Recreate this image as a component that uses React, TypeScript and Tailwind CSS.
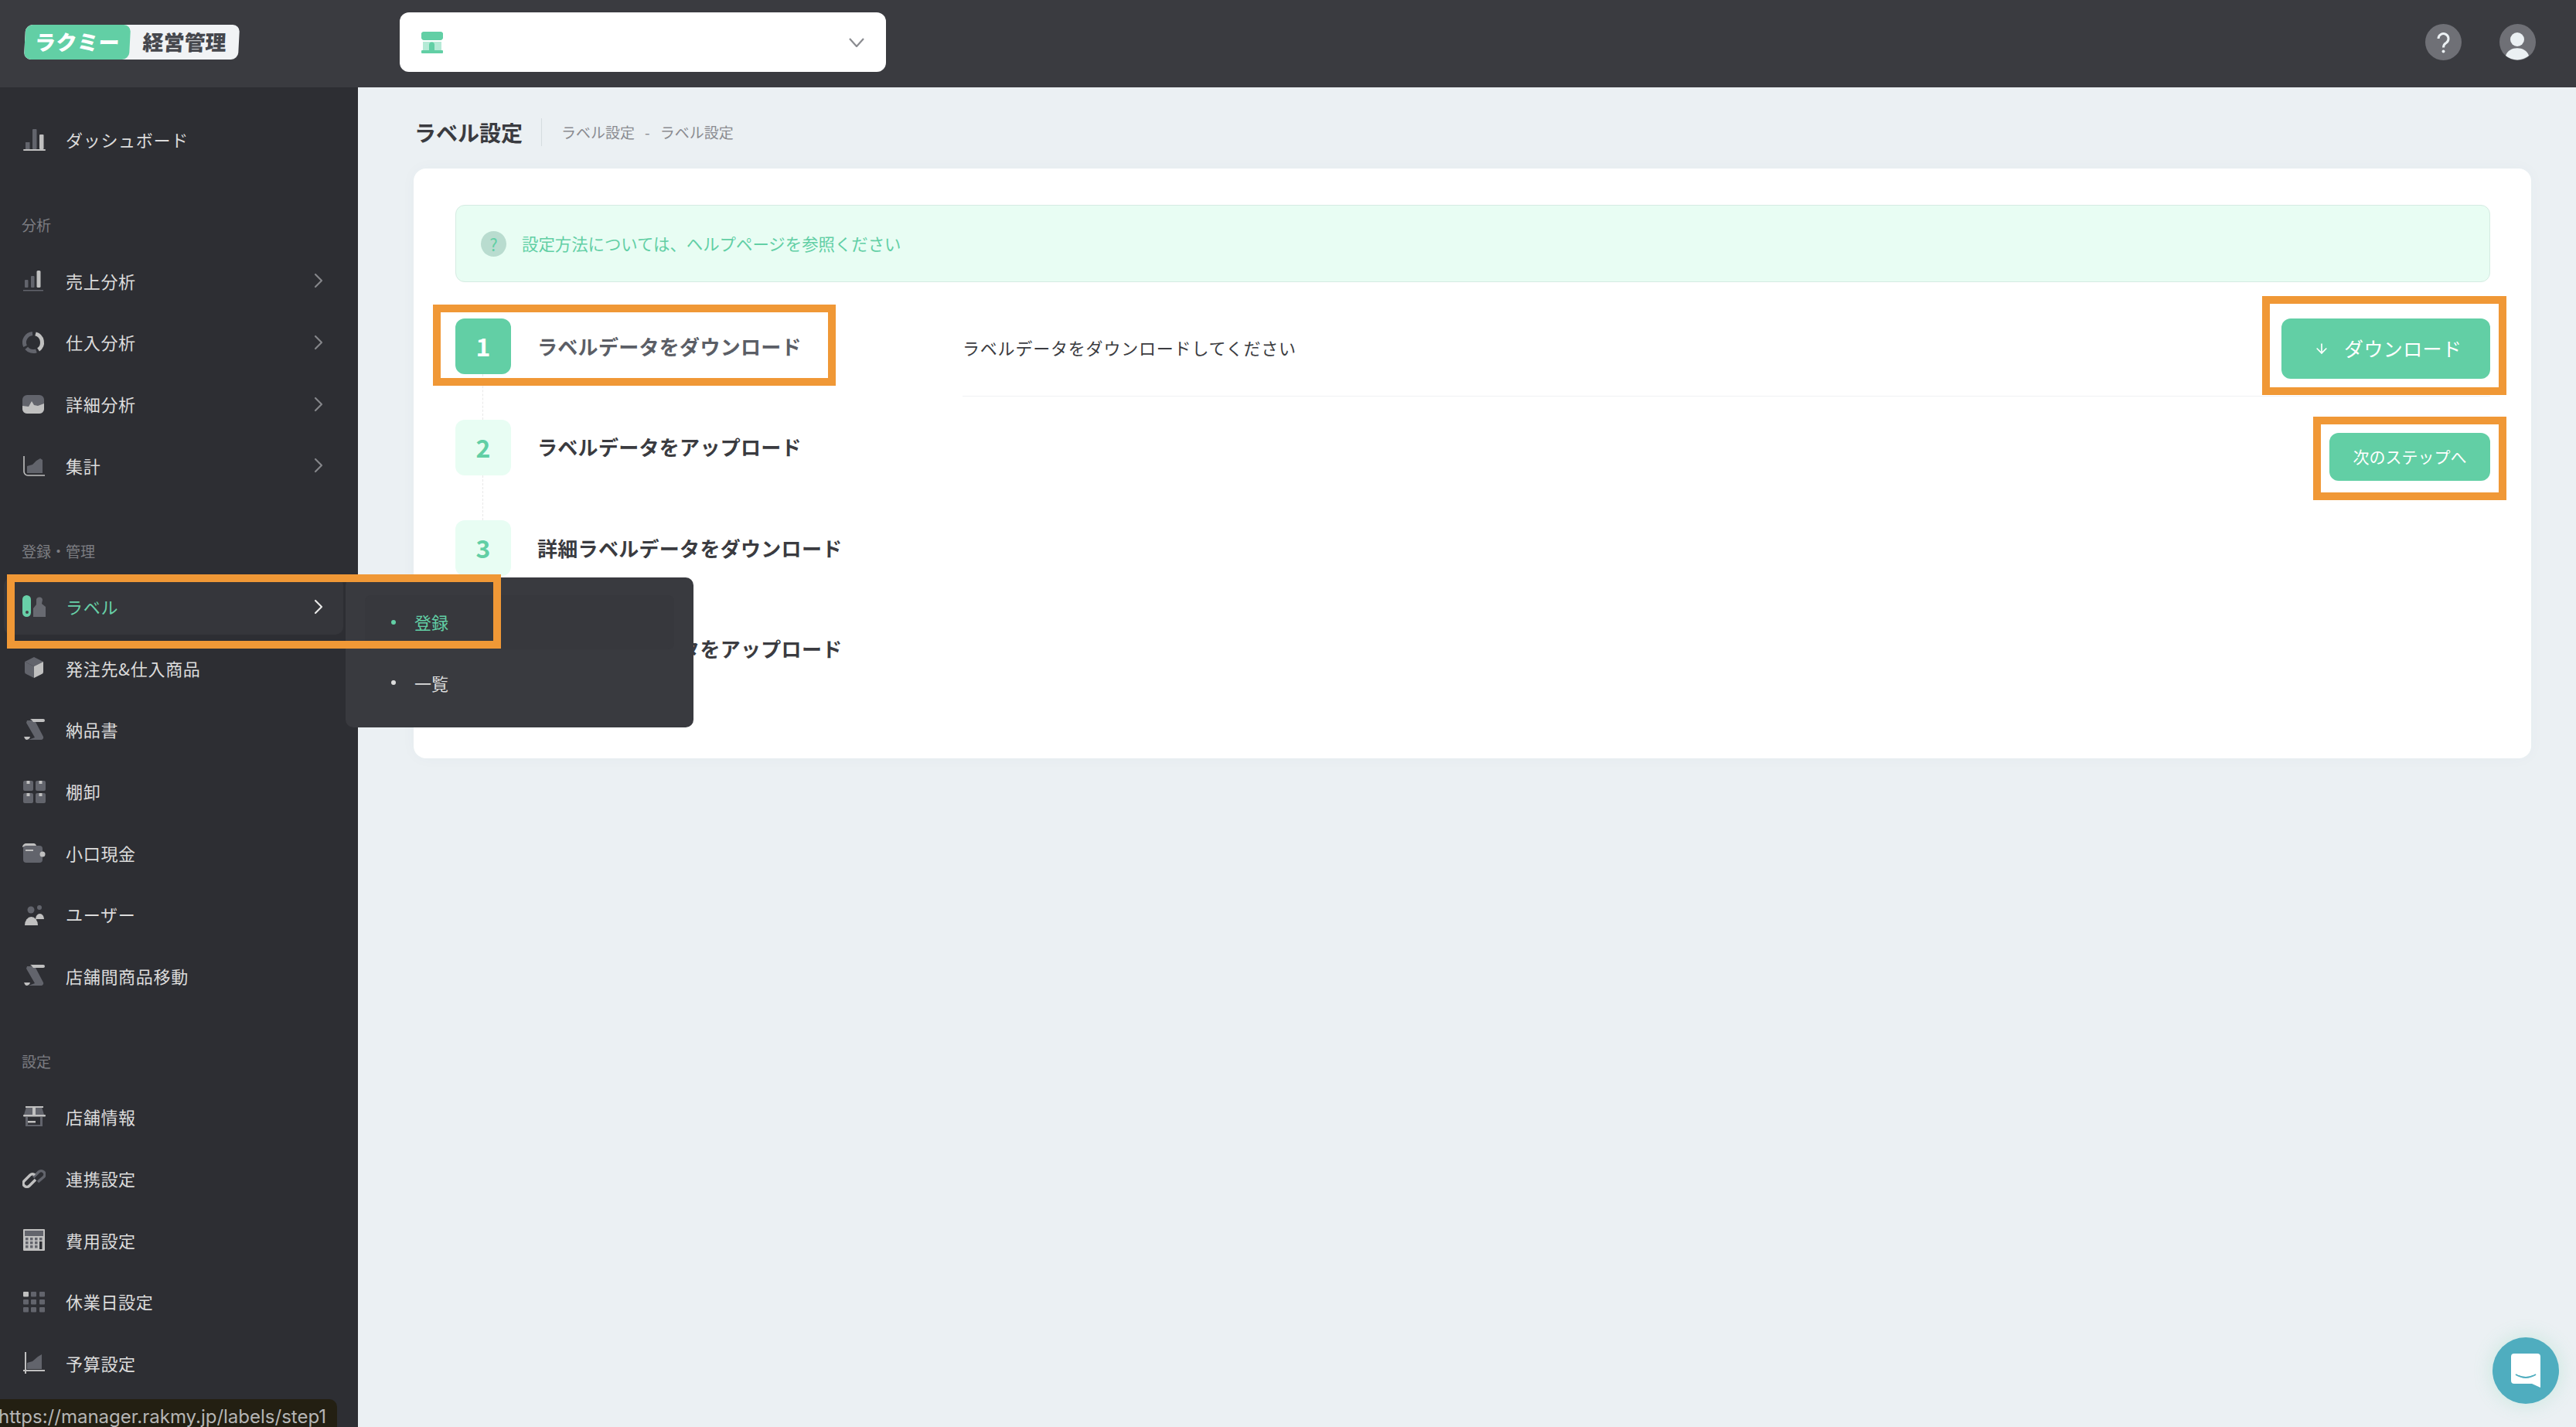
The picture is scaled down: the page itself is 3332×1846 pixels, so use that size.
import React from "react";
import { ChevronRight, ArrowDown } from "lucide-react";

const D = "#62646c";
const L = "#c0c0c0";

const Svg = ({ children }: { children: React.ReactNode }) => (
  <svg width="30" height="30" viewBox="0 0 30 30" className="shrink-0">{children}</svg>
);

const icons: Record<string, React.ReactNode> = {
  dash: (
    <Svg>
      <rect x="4" y="18" width="5.5" height="9" fill={D} />
      <rect x="13" y="1" width="5.5" height="26" rx="1" fill={D} />
      <rect x="22" y="8" width="5.5" height="19" rx="1" fill={L} />
      <rect x="1" y="27" width="29" height="2" rx="1" fill={L} />
    </Svg>
  ),
  sales: (
    <Svg>
      <rect x="3" y="14" width="4.5" height="10" rx="1" fill={D} />
      <rect x="11" y="9" width="4.5" height="15" rx="1" fill={D} />
      <rect x="18.5" y="2" width="5" height="22" rx="1.5" fill={L} />
      <rect x="1" y="27" width="26" height="1.5" fill={D} />
    </Svg>
  ),
  donut: (
    <Svg>
      <path d="M17 3.9 A11.5 11.5 0 0 1 20.6 24.4" fill="none" stroke={L} strokeWidth="5" />
      <path d="M17.9 25.8 A11.5 11.5 0 0 1 5.2 22.4" fill="none" stroke={D} strokeWidth="5" />
      <path d="M3.6 19.9 A11.5 11.5 0 0 1 13 3.5" fill="none" stroke={D} strokeWidth="5" />
    </Svg>
  ),
  area: (
    <Svg>
      <rect x="0" y="3" width="28" height="24" rx="6" fill={D} />
      <path d="M0 17 L8 18 L12 11 L15 16 L20 17 L28 14 V21 a6 6 0 0 1 -6 6 H6 a6 6 0 0 1 -6 -6 Z" fill={L} />
    </Svg>
  ),
  total: (
    <Svg>
      <path d="M2 3 V23 a5 5 0 0 0 5 5 H29" fill="none" stroke={L} strokeWidth="1.6" />
      <path d="M6 25 V16 L13 14 L18 9 L23 6 L26 8 V25 Z" fill={D} />
    </Svg>
  ),
  label: (
    <Svg>
      <path d="M14 28 V17 L18 12 V7 a4 4 0 0 1 8 -1 L25 11 L30 15 V28 Z" fill={D} />
      <rect x="0" y="0" width="11" height="28" rx="5.5" fill="#62cfa5" />
      <circle cx="6" cy="22" r="2" fill="#3a3b40" />
    </Svg>
  ),
  box: (
    <Svg>
      <path d="M15 1 L27 7 L15 13 L3 7 Z" fill={D} />
      <path d="M3 7 L15 13 V28 L5 23 a3 3 0 0 1 -2 -3 Z" fill={D} />
      <path d="M27 7 L15 13 V28 L25 23 a3 3 0 0 0 2 -3 Z" fill={L} />
    </Svg>
  ),
  doc: (
    <Svg>
      <path d="M6 3 H16 L27 24 a3 3 0 0 1 -3 4 H8 L16 25 L5 6 Z" fill={D} />
      <path d="M10 1 H27 a1 1 0 0 1 0 4 H14 Q12 2 10 1 Z" fill={L} />
      <path d="M2 24 H10 Q9 28 5 28 Q3 27 2 24 Z" fill={L} />
    </Svg>
  ),
  grid: (
    <Svg>
      {[[1, 1], [17, 1], [1, 17], [17, 17]].map(([x, y]) => (
        <g key={`${x}-${y}`}>
          <rect x={x} y={y} width="13" height="13" rx="2" fill={D} />
          <rect x={x + 4.5} y={y} width="4" height="4" fill={L} />
        </g>
      ))}
    </Svg>
  ),
  wallet: (
    <Svg>
      <path d="M0 8 a5 5 0 0 1 5 -5 H15 a4 4 0 0 1 3 4 H3 Z" fill={L} />
      <rect x="1" y="6" width="25" height="22" rx="4" fill={D} />
      <rect x="4" y="11" width="10" height="2" fill={L} />
      <circle cx="26" cy="17" r="3.5" fill={L} />
    </Svg>
  ),
  users: (
    <Svg>
      <circle cx="11" cy="9" r="4.5" fill={D} />
      <circle cx="22" cy="6" r="3" fill={D} />
      <path d="M3 29 a8.5 11 0 0 1 17 0 Z" fill={L} />
      <path d="M17 21 a5.5 7 0 0 1 11 0 Z" fill={L} />
    </Svg>
  ),
  store: (
    <Svg>
      <path d="M5 2 H25 L28 12 H2 Z" fill={D} />
      <rect x="4" y="1" width="23" height="2" fill={L} />
      <rect x="1" y="12" width="29" height="2.5" rx="1" fill={L} />
      <path d="M4 15 V27 H26 V15 H23 V25 H7 V15 Z" fill={D} />
      <rect x="7" y="20" width="10" height="2.5" fill={L} />
      <rect x="13" y="3" width="4" height="9" fill={L} />
    </Svg>
  ),
  link: (
    <Svg>
      <path d="M14 13 L21 6 a4.5 4.5 0 0 1 6.5 6.5 L20 19" fill="none" stroke={D} strokeWidth="3.5" />
      <path d="M17 16 L9 24 a4.5 4.5 0 0 1 -6.5 -6.5 L10 10 a4.5 4.5 0 0 1 6 0" fill="none" stroke={L} strokeWidth="3.5" />
    </Svg>
  ),
  calc: (
    <Svg>
      <rect x="1" y="1" width="28" height="28" rx="1" fill={L} />
      <rect x="3" y="3" width="24" height="7" fill={D} />
      {[12, 17, 22].map((y) =>
        [4, 10, 16].map((x) => <rect key={`${x}-${y}`} x={x} y={y} width="3.5" height="3.5" fill={D} />)
      )}
      <rect x="22" y="12" width="3.5" height="3.5" fill={D} />
      <rect x="22" y="17" width="3.5" height="10" fill="#2d2e33" />
    </Svg>
  ),
  days: (
    <Svg>
      {[2, 12, 22].map((y, r) =>
        [1, 11, 22].map((x, c) => (
          <rect key={`${r}-${c}`} x={x} y={y} width="7" height="6.5" rx="1" fill={r === 0 && c === 0 ? L : D} />
        ))
      )}
    </Svg>
  ),
  budget: (
    <Svg>
      <rect x="3" y="1" width="2" height="28" fill={L} />
      <rect x="1" y="24" width="28" height="2" fill={L} />
      <path d="M6 23 V15 L13 13 L20 7 L25 4 V23 Z" fill={D} />
    </Svg>
  ),
};

const Row = ({ icon, label, more, active }: { icon: string; label: string; more?: boolean; active?: boolean }) => (
  <div className="flex h-[79.6px] shrink-0 items-center pr-[35px] pl-[29px]">
    <div className="flex items-center">{icons[icon]}</div>
    <span className={`ml-[26px] flex-1 text-[22px] tracking-[0.7px] ${active ? "text-[#62cfa5]" : "text-[#dcdcdc]"}`}>{label}</span>
    {more && <ChevronRight size={32} strokeWidth={1.6} className={active ? "text-[#e8e8e8]" : "text-[#85868b]"} />}
  </div>
);

const Section = ({ title, className }: { title: string; className: string }) => (
  <div className={`flex h-[40px] shrink-0 items-center pl-[28px] text-[19px] text-[#7c7d82] ${className}`}>{title}</div>
);

const Step = ({ n, text, active }: { n: number; text: string; active?: boolean }) => (
  <div className="flex items-center">
    <div className={`flex h-[72px] w-[72px] items-center justify-center rounded-[12px] text-[32px] font-bold ${active ? "bg-[#62cfa5] text-white" : "bg-[#e8fdf3] text-[#62cfa5]"}`}>
      <span className="-translate-y-[1px]">{n}</span>
    </div>
    <div className={`ml-[34px] -translate-y-[1px] text-[26px] font-bold tracking-[0.3px] whitespace-nowrap ${active ? "text-[#5b5e66]" : "text-[#3a3b40]"}`}>{text}</div>
  </div>
);

const Line = () => <div className="ml-[35px] h-[58.6px] w-0 border-l border-dashed border-[#e8e8e8]" />;

const Mark = ({ className }: { className: string }) => (
  <div className={`pointer-events-none absolute border-[10px] border-[#f09836] ${className}`} />
);

export default function App() {
  return (
    <div className="relative flex h-screen w-full flex-col overflow-hidden bg-[#ebf0f3] font-['Noto_Sans_CJK_JP','Noto_Sans',sans-serif]">
      <header className="flex h-[113px] shrink-0 items-center bg-[#3a3b40] pb-[4px]">
        <div className="ml-[32px] flex h-[45px] w-[277px] -skew-x-3 overflow-hidden rounded-[9px] bg-[#f1f3f5]">
          <div className="flex w-[136px] items-center justify-center rounded-[9px] bg-[#62cfa5] text-[27px] font-black tracking-[0.5px] text-white">ラクミー</div>
          <div className="flex flex-1 items-center justify-center text-[27px] font-black text-[#45474d]">経営管理</div>
        </div>
        <div className="ml-[208px] flex h-[77px] w-[629px] items-center justify-between rounded-[12px] bg-white pr-[28px] pl-[28px]">
          <svg width="28" height="28" viewBox="0 0 28 28">
            <path d="M4 0 H24 a4 4 0 0 1 4 6 a4 4 0 0 1 -3 5 H3 a4 4 0 0 1 -3 -5 a4 4 0 0 1 4 -6 Z" fill="#62cfa5" />
            <rect x="2" y="13" width="24" height="11" fill="#b5ead6" />
            <path d="M10 24 V17 a3.5 3.5 0 0 1 7 0 V24 Z" fill="#62cfa5" />
            <rect x="0" y="24" width="28" height="4" rx="1" fill="#62cfa5" />
          </svg>
          <svg width="20" height="12" viewBox="0 0 20 12">
            <path d="M1 1 L10 11 L19 1" fill="none" stroke="#8a8b90" strokeWidth="2.2" />
          </svg>
        </div>
        <div className="ml-auto mr-[52px] flex items-center gap-[49px]">
          <svg width="47" height="47" viewBox="0 0 47 47">
            <circle cx="23.5" cy="23.5" r="23.5" fill="#6f7076" />
            <path d="M17 19 a6.5 6.5 0 1 1 10 5.5 q-3.5 2 -3.5 6" fill="none" stroke="#ebf0f3" strokeWidth="3" />
            <circle cx="23.5" cy="35.5" r="2" fill="#ebf0f3" />
          </svg>
          <svg width="47" height="47" viewBox="0 0 47 47">
            <circle cx="23.5" cy="23.5" r="23.5" fill="#6f7076" />
            <circle cx="23" cy="20" r="9" fill="#ebf0f3" />
            <path d="M8 41 C12 28 34 28 38 41 A23.5 23.5 0 0 1 8 41 Z" fill="#ebf0f3" />
          </svg>
        </div>
      </header>

      <div className="flex min-h-0 flex-1">
        <aside className="flex w-[463px] shrink-0 flex-col bg-[#2d2e33] pt-[28px]">
          <Row icon="dash" label="ダッシュボード" />
          <Section title="分析" className="mt-[51px] mb-[12px]" />
          <Row icon="sales" label="売上分析" more />
          <Row icon="donut" label="仕入分析" more />
          <Row icon="area" label="詳細分析" more />
          <Row icon="total" label="集計" more />
          <Section title="登録・管理" className="mt-[51px] mb-[12px]" />
          <Row icon="label" label="ラベル" more active />
          <Row icon="box" label="発注先&仕入商品" />
          <Row icon="doc" label="納品書" />
          <Row icon="grid" label="棚卸" />
          <Row icon="wallet" label="小口現金" />
          <Row icon="users" label="ユーザー" />
          <Row icon="doc" label="店舗間商品移動" />
          <Section title="設定" className="mt-[51px] mb-[12px]" />
          <Row icon="store" label="店舗情報" />
          <Row icon="link" label="連携設定" />
          <Row icon="calc" label="費用設定" />
          <Row icon="days" label="休業日設定" />
          <Row icon="budget" label="予算設定" />
        </aside>

        <main className="min-w-0 flex-1 pt-[40px] pr-[58px] pl-[72px]">
          <div className="flex h-[36px] items-center">
            <h1 className="pl-[1px] text-[28px] font-bold text-[#3a3b40]">ラベル設定</h1>
            <div className="ml-[24px] h-[36px] w-px bg-[#d5dce0]" />
            <div className="ml-[25px] flex gap-[13px] text-[19px] text-[#8a8b90]">
              <span>ラベル設定</span>
              <span>-</span>
              <span>ラベル設定</span>
            </div>
          </div>

          <section className="mt-[29px] rounded-[16px] bg-white pt-[47px] pr-[53px] pb-[105px] pl-[54px] shadow-[0_0_20px_rgba(76,87,125,0.03)]">
            <div className="flex h-[100px] items-center rounded-[12px] border border-[#d5ebe2] bg-[#e8fdf3] pl-[32px]">
              <div className="flex h-[33px] w-[33px] items-center justify-center rounded-full bg-[#b9dccf] text-[22px] text-[#62cfa5]">?</div>
              <span className="ml-[20px] text-[21.4px] text-[#62cfa5]">設定方法については、ヘルプページを参照ください</span>
            </div>

            <div className="mt-[47px] flex">
              <div className="w-[656px] shrink-0">
                <Step n={1} text="ラベルデータをダウンロード" active />
                <Line />
                <Step n={2} text="ラベルデータをアップロード" />
                <Line />
                <Step n={3} text="詳細ラベルデータをダウンロード" />
                <Line />
                <Step n={4} text="詳細ラベルデータをアップロード" />
              </div>
              <div className="min-w-0 flex-1">
                <div className="flex h-[101px] items-start justify-between border-b border-[#f0f1f3]">
                  <div className="flex h-[75px] items-center text-[22px] tracking-[0.8px] text-[#3a3b40]">ラベルデータをダウンロードしてください</div>
                  <button className="flex h-[78px] w-[270px] items-center rounded-[12px] bg-[#62cfa5] pl-[42px] text-[25px] tracking-[0.4px] text-white">
                    <ArrowDown size={20} strokeWidth={2} />
                    <span className="ml-[19px]">ダウンロード</span>
                  </button>
                </div>
                <div className="mt-[47px] flex justify-end">
                  <button className="flex h-[62px] w-[208px] items-center justify-center rounded-[12px] bg-[#62cfa5] text-[21px] text-white">次のステップへ</button>
                </div>
              </div>
            </div>
          </section>
        </main>
      </div>

      {/* highlighted row background */}
      <div className="pointer-events-none absolute top-[747px] left-[5px] h-[74px] w-[439px] rounded-[10px] bg-[#ffffff0a]" />

      {/* flyout */}
      <div className="absolute top-[747px] left-[447px] flex h-[194px] w-[450px] flex-col rounded-[10px] bg-[#393a3f] px-[25px] pt-[23px]">
        <div className="flex h-[70px] items-center rounded-[8px] bg-[#37383d] pl-[34px] pb-[1px] text-[22px] text-[#62cfa5]">
          <span className="h-[6px] w-[6px] rounded-full bg-[#62cfa5]" />
          <span className="ml-[24px]">登録</span>
        </div>
        <div className="flex h-[70px] items-center pl-[34px] pt-[16px] text-[22px] text-[#dcdcdc]">
          <span className="h-[6px] w-[6px] rounded-full bg-[#dcdcdc]" />
          <span className="ml-[24px]">一覧</span>
        </div>
      </div>

      <Mark className="top-[743px] left-[9px] h-[96px] w-[639px]" />
      <Mark className="top-[394px] left-[560px] h-[105px] w-[521px]" />
      <Mark className="top-[383px] left-[2926px] h-[128px] w-[316px]" />
      <Mark className="top-[539px] left-[2992px] h-[108px] w-[250px]" />

      {/* browser status bubble */}
      <div className="absolute bottom-0 left-0 flex h-[36px] w-[436px] items-center overflow-hidden rounded-tr-[10px] bg-[#231f12] pt-[9px] font-['Inter',sans-serif] text-[24px] leading-[27px] whitespace-nowrap text-[#b5b5b5]">
        <span className="-ml-[2px]">https://manager.rakmy.jp/labels/step1</span>
      </div>

      {/* chat launcher */}
      <div className="absolute top-[1730px] left-[3224px] flex h-[86px] w-[86px] items-center justify-center rounded-full bg-[#4fadbf] shadow-[0_0_24px_rgba(98,207,165,0.25)]">
        <svg width="38" height="44" viewBox="0 0 38 44">
          <path d="M4 0 H34 a4 4 0 0 1 4 4 V44 L27 39 H4 a4 4 0 0 1 -4 -4 V4 a4 4 0 0 1 4 -4 Z" fill="#fff" />
          <path d="M6 27 Q19 35 32 27" fill="none" stroke="#4fadbf" strokeWidth="2" />
        </svg>
      </div>
    </div>
  );
}
